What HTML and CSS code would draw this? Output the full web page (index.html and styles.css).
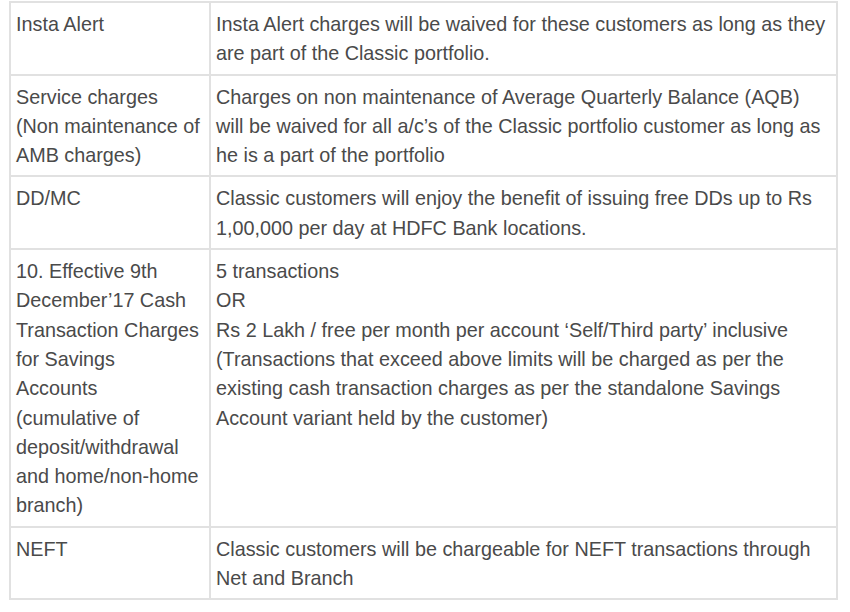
FILE: index.html
```html
<!DOCTYPE html>
<html>
<head>
<meta charset="utf-8">
<link rel="stylesheet" href="styles.css">
</head>
<body>
<table class="charges">
  <colgroup>
    <col class="col-label">
    <col class="col-desc">
  </colgroup>
  <tr>
    <td class="label">Insta Alert</td>
    <td class="desc">Insta Alert charges will be waived for these customers as long as they are part of the Classic portfolio.</td>
  </tr>
  <tr>
    <td class="label">Service charges (Non maintenance of AMB charges)</td>
    <td class="desc">Charges on non maintenance of Average Quarterly Balance (AQB) will be waived for all a/c’s of the Classic portfolio customer as long as he is a part of the portfolio</td>
  </tr>
  <tr>
    <td class="label">DD/MC</td>
    <td class="desc">Classic customers will enjoy the benefit of issuing free DDs up to Rs 1,00,000 per day at HDFC Bank locations.</td>
  </tr>
  <tr>
    <td class="label">10. Effective 9th December’17 Cash Transaction Charges for Savings Accounts (cumulative of deposit/withdrawal and home/non-home branch)</td>
    <td class="desc">5 transactions<br>OR<br>Rs 2 Lakh / free per month per account ‘Self/Third party’ inclusive (Transactions that exceed above limits will be charged as per the existing cash transaction charges as per the standalone Savings Account variant held by the customer)</td>
  </tr>
  <tr>
    <td class="label">NEFT</td>
    <td class="desc">Classic customers will be chargeable for NEFT transactions through Net and Branch</td>
  </tr>
</table>
</body>
</html>
```
FILE: styles.css
```css
html, body {
  margin: 0;
  background: #ffffff;
}
body {
  padding: 1px 0 0 9px;
}
.charges {
  border-collapse: collapse;
  table-layout: fixed;
  width: 829px;
  font-family: "Liberation Sans", Arial, sans-serif;
  font-size: 19.8px;
  line-height: 29.3px;
  color: #4a4a4a;
}
.col-label {
  width: 200px;
}
.charges td {
  border: 2px solid #e1e1e1;
  padding: 7px 5px 5px 5px;
  vertical-align: top;
  text-align: left;
}
.charges .label {
  padding-right: 9px;
}
```
